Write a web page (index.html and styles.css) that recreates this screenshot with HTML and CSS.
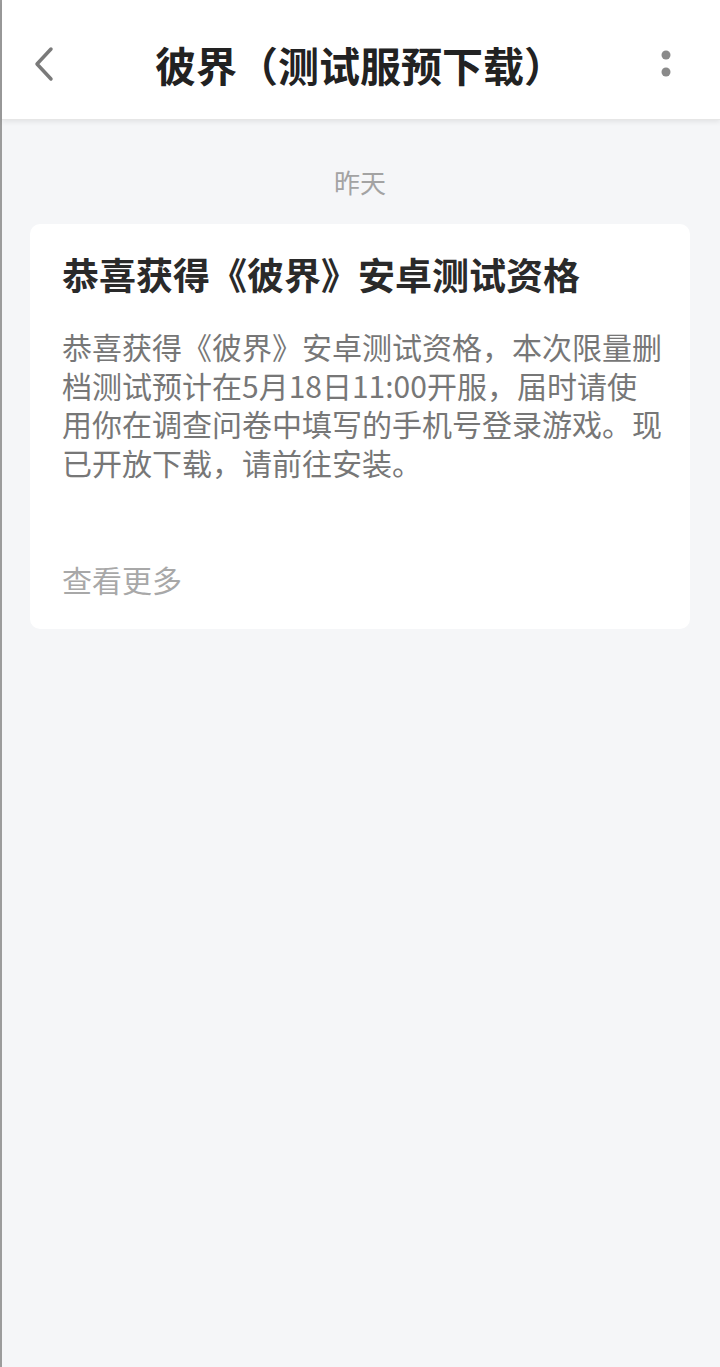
FILE: index.html
```html
<!DOCTYPE html>
<html lang="zh-CN">
<head>
  <meta charset="UTF-8">
  <meta name="viewport" content="width=device-width, initial-scale=1.0">
  <title>彼界（测试服预下载）</title>
  <link rel="stylesheet" href="styles.css">
</head>
<body>
  <div class="page">
    <!-- Header -->
    <div class="header">
      <button class="icon-btn back">
        <svg width="24" height="36" viewBox="0 0 24 36">
          <path d="M19 3 L5 18 L19 33" fill="none" stroke="#7a7a7a" stroke-width="3.5" stroke-linecap="round" stroke-linejoin="round"/>
        </svg>
      </button>
      <h1 class="title">彼界（测试服预下载）</h1>
      <button class="icon-btn more">
        <svg width="12" height="32" viewBox="0 0 12 32">
          <circle cx="6" cy="7" r="4.5" fill="#8a8a8a"/>
          <circle cx="6" cy="24" r="4.5" fill="#8a8a8a"/>
        </svg>
      </button>
    </div>

    <div class="content">
      <div class="date">昨天</div>

      <div class="msg-card">
        <h2>恭喜获得《彼界》安卓测试资格</h2>
        <p>恭喜获得《彼界》安卓测试资格，本次限量删<br>档测试预计在5月18日11:00开服，届时请使<br>用你在调查问卷中填写的手机号登录游戏。现<br>已开放下载，请前往安装。</p>
        <div class="more-link">查看更多</div>
      </div>
    </div>
  </div>
</body>
</html>
```

FILE: styles.css
```css
body {
  font-family: "Noto Sans CJK SC", "Noto Sans", sans-serif;
  background-color: #f5f6f8;
  margin: 0;
  padding: 0;
}
.page {
  min-height: 100vh;
  border-left: 2px solid #9c9c9c;
  box-sizing: border-box;
}
.header {
  height: 120px;
  background: #fff;
  display: flex;
  align-items: center;
  justify-content: space-between;
  padding: 8px 48px 0 30px;
  box-shadow: 0 2px 5px rgba(0, 0, 0, 0.08);
  border-bottom: 1px solid #e6e6e6;
  box-sizing: border-box;
}
.icon-btn {
  background: none;
  border: none;
  padding: 0;
  display: flex;
  align-items: center;
  cursor: pointer;
}
.title {
  flex: 1;
  margin: 0 0 0 4px;
  text-align: center;
  font-size: 41px;
  font-weight: bold;
  color: #222;
  letter-spacing: 0;
}
.content {
  padding: 0 30px 0 28px;
}
.date {
  margin-top: 42px;
  line-height: 40px;
  text-align: center;
  font-size: 26px;
  color: #a3a3a3;
}
.msg-card {
  margin-top: 22px;
  background: #fff;
  border-radius: 10px;
  padding: 25px 26px 30px 32px;
}
.msg-card h2 {
  margin: 0;
  font-size: 37px;
  line-height: 50px;
  font-weight: bold;
  color: #2a2a2a;
}
.msg-card p {
  margin: 28px 0 0;
  font-size: 30px;
  line-height: 38.5px;
  color: #777;
  white-space: nowrap;
}
.more-link {
  margin-top: 78px;
  font-size: 30px;
  line-height: 40px;
  color: #a8a8a8;
}
```
